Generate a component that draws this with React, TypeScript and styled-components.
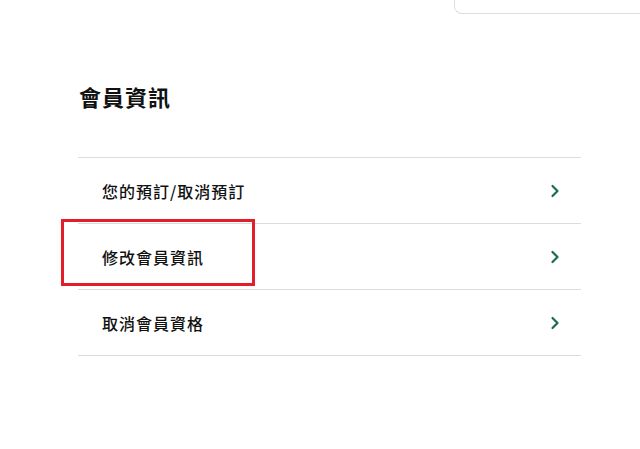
import React from "react";
import styled, { createGlobalStyle } from "styled-components";

const Global = createGlobalStyle`
  html, body { margin: 0; padding: 0; background: #fff; overflow: hidden; }
  body { font-family: "Noto Sans CJK TC", "Noto Sans", sans-serif; color: #1a1a1a; }
`;

const Page = styled.div`
  width: 640px;
  height: 449px;
  display: flex;
  flex-direction: column;
`;

const TopBar = styled.div`
  display: flex;
  justify-content: flex-end;
  height: 14px;
`;

const TopBox = styled.div`
  width: 190px;
  height: 13px;
  margin-right: -6px;
  border: 1px solid #dedede;
  border-top: none;
  border-radius: 0 0 0 8px;
`;

const Content = styled.section`
  width: 503px;
  margin-left: 78px;
  display: flex;
  flex-direction: column;
`;

const Heading = styled.h1`
  margin: 67px 0 0 1px;
  font-size: 22px;
  line-height: 30px;
  font-weight: 700;
  letter-spacing: 1px;
  color: #111;
`;

const List = styled.ul`
  list-style: none;
  margin: 46px 0 0;
  padding: 0;
  border-top: 1px solid #dcdcdc;
`;

const Row = styled.li`
  position: relative;
  height: 65px;
  border-bottom: 1px solid #dcdcdc;
  display: flex;
  align-items: center;
  justify-content: space-between;
  padding: 0 21px 0 24px;
`;

const Label = styled.span`
  font-size: 16px;
  font-weight: 500;
  letter-spacing: 1px;
  color: #111;
`;

const Highlight = styled.div`
  position: absolute;
  left: -17px;
  top: -5px;
  width: 188px;
  height: 61px;
  border: 3px solid #e31e2a;
  pointer-events: none;
`;

const Chevron = () => (
  <svg width="10" height="14" viewBox="0 0 10 14" fill="none">
    <path d="M2.5 2 L7.5 7 L2.5 12" stroke="#1b6a55" strokeWidth="2.2" strokeLinecap="round" strokeLinejoin="round" />
  </svg>
);

const items = [
  { label: "您的預訂/取消預訂" },
  { label: "修改會員資訊", highlight: true },
  { label: "取消會員資格" },
];

export default function App() {
  return (
    <Page>
      <Global />
      <TopBar>
        <TopBox />
      </TopBar>
      <Content>
        <Heading>會員資訊</Heading>
        <List>
          {items.map((it) => (
            <Row key={it.label}>
              {it.highlight && <Highlight />}
              <Label>{it.label}</Label>
              <Chevron />
            </Row>
          ))}
        </List>
      </Content>
    </Page>
  );
}
